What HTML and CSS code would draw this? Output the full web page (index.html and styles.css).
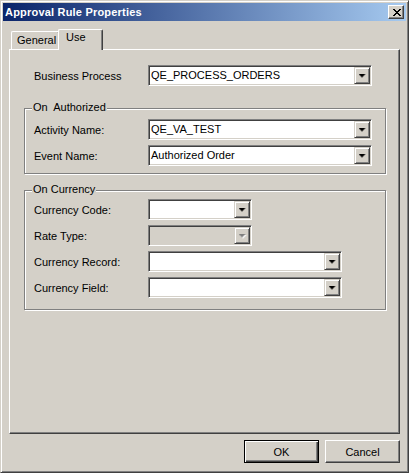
FILE: index.html
```html
<!DOCTYPE html>
<html lang="en">
<head>
    <meta charset="UTF-8">
    <meta name="viewport" content="width=device-width, initial-scale=1.0">
    <title>Approval Rule Properties</title>
    <link rel="stylesheet" href="styles.css">
</head>
<body>
    <div class="window">
        <div class="titlebar">
            <span class="title">Approval Rule Properties</span>
            <button class="close" type="button">
                <svg width="8" height="7" viewBox="0 0 8 7" shape-rendering="crispEdges">
                    <path d="M0 0h2v1h1v1h2v-1h1v-1h2v1h-1v1h-1v1h-1v1h1v1h1v1h1v1h-2v-1h-1v-1h-2v1h-1v1h-2v-1h1v-1h1v-1h1v-1h-1v-1h-1v-1h-1z"/>
                </svg>
            </button>
        </div>

        <div class="dialog">
            <div class="tabs">
                <div class="tab tab-general">General</div>
                <div class="tab tab-use active">Use</div>
            </div>

            <div class="panel">
                <div class="row top-row">
                    <span class="label">Business Process</span>
                    <div class="combo combo-wide">
                        <span class="combo-value caps">QE_PROCESS_ORDERS</span>
                        <span class="combo-btn"><span class="arrow"></span></span>
                    </div>
                </div>

                <div class="group group-authorized">
                    <div class="group-title">On&nbsp; Authorized</div>
                    <div class="row">
                        <span class="label">Activity Name:</span>
                        <div class="combo combo-wide">
                            <span class="combo-value caps">QE_VA_TEST</span>
                            <span class="combo-btn"><span class="arrow"></span></span>
                        </div>
                    </div>
                    <div class="row">
                        <span class="label">Event Name:</span>
                        <div class="combo combo-wide">
                            <span class="combo-value">Authorized Order</span>
                            <span class="combo-btn"><span class="arrow"></span></span>
                        </div>
                    </div>
                </div>

                <div class="group group-currency">
                    <div class="group-title">On Currency</div>
                    <div class="row">
                        <span class="label">Currency Code:</span>
                        <div class="combo combo-short">
                            <span class="combo-value"></span>
                            <span class="combo-btn"><span class="arrow"></span></span>
                        </div>
                    </div>
                    <div class="row">
                        <span class="label">Rate Type:</span>
                        <div class="combo combo-short disabled">
                            <span class="combo-value"></span>
                            <span class="combo-btn"><span class="arrow-shadow"><span class="arrow"></span></span></span>
                        </div>
                    </div>
                    <div class="row">
                        <span class="label">Currency Record:</span>
                        <div class="combo combo-mid">
                            <span class="combo-value"></span>
                            <span class="combo-btn"><span class="arrow"></span></span>
                        </div>
                    </div>
                    <div class="row">
                        <span class="label">Currency Field:</span>
                        <div class="combo combo-mid">
                            <span class="combo-value"></span>
                            <span class="combo-btn"><span class="arrow"></span></span>
                        </div>
                    </div>
                </div>
            </div>

            <div class="buttons">
                <button class="btn default" type="button">OK</button>
                <button class="btn" type="button">Cancel</button>
            </div>
        </div>
    </div>
</body>
</html>
```

FILE: styles.css
```css
* {
    box-sizing: border-box;
}

body {
    margin: 0;
    background-color: #d4d0c8;
    font-family: "Liberation Sans", Arial, sans-serif;
    font-size: 11px;
    color: #000;
}

/* outer dialog frame */
.window {
    width: 409px;
    height: 473px;
    padding: 2px;
    border: 1px solid;
    border-color: #d4d0c8 #404040 #404040 #d4d0c8;
    box-shadow: inset 1px 1px #fff, inset -1px -1px #808080;
    background-color: #d4d0c8;
}

.titlebar {
    display: flex;
    align-items: center;
    height: 18px;
    padding-left: 2px;
    background: linear-gradient(to right, #0a246a, #a6caf0);
    color: #fff;
    font-weight: bold;
}

.title {
    letter-spacing: 0.2px;
}

.close {
    display: flex;
    align-items: center;
    justify-content: center;
    width: 16px;
    height: 14px;
    margin-left: auto;
    margin-right: 2px;
    padding: 0 0 0 1px;
    border: 1px solid;
    border-color: #fff #404040 #404040 #fff;
    box-shadow: inset -1px -1px #808080;
    background-color: #d4d0c8;
}

.dialog {
    padding: 8px 6px 0;
}

/* tab strip */
.tabs {
    display: flex;
    align-items: flex-end;
    height: 20px;
    padding-left: 2px;
}

.tab {
    height: 18px;
    padding-left: 5px;
    border: 1px solid;
    border-bottom: none;
    border-color: #fff #404040 #404040 #fff;
    border-radius: 2px 2px 0 0;
    box-shadow: inset -1px 0 #808080;
    line-height: 17px;
    background-color: #d4d0c8;
}

.tab-general {
    width: 49px;
}

.tab-use {
    width: 45px;
    padding-left: 7px;
}

.tab.active {
    position: relative;
    z-index: 1;
    height: 21px;
    margin-left: -2px;
    margin-bottom: -1px;
    line-height: 15px;
}

.panel {
    height: 385px;
    padding: 15px 0 0 14px;
    border: 1px solid;
    border-color: #fff #404040 #404040 #fff;
    box-shadow: inset -1px -1px #808080;
}

.row {
    display: flex;
    align-items: center;
    height: 21px;
}

.top-row {
    padding-left: 10px;
}

.label {
    width: 114px;
    flex-shrink: 0;
}

/* etched group boxes */
.group {
    width: 362px;
    padding: 0 0 7px 9px;
    border: 1px solid #808080;
    box-shadow: 1px 1px #fff, inset 1px 1px #fff;
}

.group-authorized {
    margin-top: 22px;
}

.group-currency {
    margin-top: 16px;
    padding-bottom: 11px;
}

.group-title {
    width: fit-content;
    margin: -8px 0 0 -2px;
    padding: 0 1px;
    line-height: 13px;
    background-color: #d4d0c8;
}

.group .row {
    margin-top: 5px;
}

.group-currency .group-title + .row {
    margin-top: 3px;
}

/* drop-down combo boxes */
.combo {
    display: flex;
    height: 21px;
    padding: 1px;
    border: 1px solid;
    border-color: #808080 #fff #fff #808080;
    box-shadow: inset 1px 1px #404040, inset -1px -1px #d4d0c8;
    background-color: #fff;
}

.combo-wide {
    width: 224px;
}

.combo-short {
    width: 104px;
}

.combo-mid {
    width: 194px;
}

.combo.disabled {
    background-color: #d4d0c8;
}

.combo-value {
    flex: 1;
    padding-left: 1px;
    line-height: 17px;
    white-space: nowrap;
}

.combo-btn {
    display: flex;
    align-items: center;
    justify-content: center;
    width: 16px;
    height: 17px;
    border: 1px solid;
    border-color: #d4d0c8 #404040 #404040 #d4d0c8;
    box-shadow: inset 1px 1px #fff, inset -1px -1px #808080;
    background-color: #d4d0c8;
}

.arrow {
    display: block;
    width: 7px;
    height: 4px;
    background-color: #000;
    clip-path: polygon(0 0, 7px 0, 7px 1px, 6px 1px, 6px 2px, 5px 2px, 5px 3px, 4px 3px, 4px 4px, 3px 4px, 3px 3px, 2px 3px, 2px 2px, 1px 2px, 1px 1px, 0 1px);
}

.arrow-shadow {
    display: block;
    filter: drop-shadow(1px 1px 0 #fff);
}

.disabled .arrow {
    background-color: #808080;
}

/* bottom buttons */
.buttons {
    display: flex;
    justify-content: flex-end;
    gap: 6px;
    margin-top: 6px;
}

.btn {
    width: 75px;
    height: 23px;
    padding: 0;
    border: 1px solid;
    border-color: #fff #404040 #404040 #fff;
    box-shadow: inset -1px -1px #808080;
    background-color: #d4d0c8;
    font-family: inherit;
    font-size: 11px;
    color: #000;
}

.btn.default {
    border-color: #000;
    box-shadow: inset 1px 1px #fff, inset -1px -1px #404040, inset -2px -2px #808080;
}
```
